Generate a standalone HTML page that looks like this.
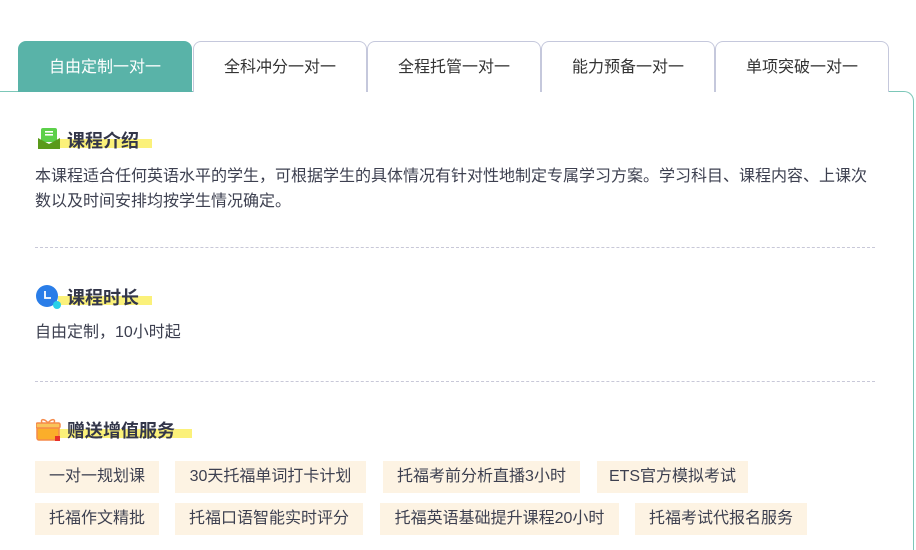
<!DOCTYPE html>
<html><head><meta charset="utf-8"><style>
*{margin:0;padding:0;box-sizing:border-box}
html,body{width:916px;height:550px;overflow:hidden}
body{background:#fff;font-family:"Liberation Sans","Noto Sans CJK SC",sans-serif;color:#3a3d4a;position:relative}
.tab{position:absolute;top:41px;height:51px;width:174px;border:1px solid #c5c8dc;border-bottom:none;border-radius:8px 8px 0 0;background:#fff;text-align:center;line-height:52px;font-size:16px;color:#333}
.tab.on{background:#59b3a8;border-color:#59b3a8;color:#fff}
.panel{position:absolute;left:-2px;top:91px;width:916px;height:459px;border:1px solid #7cc7b8;border-bottom:none;border-radius:0 10px 0 0}
.h{position:absolute;left:67px;font-size:18px;font-weight:bold;color:#33364a}
.hl{position:absolute;height:9px;background:#fbf17a}
.p{position:absolute;left:35px;font-size:16px;line-height:25px;color:#3d4050;width:840px}
.dash{position:absolute;left:35px;width:840px;border-top:1px dashed #c8c8d8}
.tag{position:absolute;height:32px;background:#fdf3e3;font-size:16px;line-height:32px;text-align:center;color:#3d4050}
</style></head><body>
<div class="panel"></div>
<div class="tab on" style="left:18px">自由定制一对一</div>
<div class="tab" style="left:193px">全科冲分一对一</div>
<div class="tab" style="left:367px">全程托管一对一</div>
<div class="tab" style="left:541px">能力预备一对一</div>
<div class="tab" style="left:715px">单项突破一对一</div>

<div class="hl" style="left:58px;top:139px;width:94px"></div>
<svg style="position:absolute;left:38px;top:128px" width="22" height="22"><rect x="3" y="0" width="16" height="14" rx="2" fill="#5cd04a"/><rect x="7" y="3" width="8" height="1.6" fill="#fff"/><rect x="7" y="6" width="8" height="1.6" fill="#fff"/><path d="M0 10 L11 16 L22 10 V21 H0Z" fill="#5a9a1a"/></svg>
<div class="h" style="top:127px">课程介绍</div>
<div class="p" style="top:164px">本课程适合任何英语水平的学生，可根据学生的具体情况有针对性地制定专属学习方案。学习科目、课程内容、上课次数以及时间安排均按学生情况确定。</div>
<div class="dash" style="top:247px"></div>

<div class="hl" style="left:58px;top:296px;width:94px"></div>
<svg style="position:absolute;left:36px;top:285px" width="26" height="26"><circle cx="11" cy="11" r="11" fill="#2a7de8"/><path d="M9 6 V13 H15" stroke="#fff" stroke-width="1.8" fill="none"/><circle cx="21" cy="20" r="4" fill="#2ad0e8"/></svg>
<div class="h" style="top:284px">课程时长</div>
<div class="p" style="top:320px">自由定制，10小时起</div>
<div class="dash" style="top:381px"></div>

<div class="hl" style="left:58px;top:429px;width:134px"></div>
<svg style="position:absolute;left:36px;top:418px" width="26" height="24"><rect x="1" y="8" width="22" height="14" rx="2" fill="#fbae2a" stroke="#f58a4a" stroke-width="1.5"/><rect x="0" y="5" width="24" height="5" rx="1.5" fill="#f9c45a" stroke="#f58a4a" stroke-width="1.5"/><path d="M12 5 C8 0 4 1 6 5 M12 5 C16 0 20 1 18 5" stroke="#f58a4a" stroke-width="1.5" fill="none"/><rect x="19" y="18" width="5" height="5" fill="#e8302a"/></svg>
<div class="h" style="top:417px">赠送增值服务</div>

<div class="tag" style="left:35px;top:461px;width:124px">一对一规划课</div>
<div class="tag" style="left:175px;top:461px;width:191px">30天托福单词打卡计划</div>
<div class="tag" style="left:383px;top:461px;width:197px">托福考前分析直播3小时</div>
<div class="tag" style="left:597px;top:461px;width:151px">ETS官方模拟考试</div>
<div class="tag" style="left:35px;top:503px;width:124px">托福作文精批</div>
<div class="tag" style="left:175px;top:503px;width:188px">托福口语智能实时评分</div>
<div class="tag" style="left:380px;top:503px;width:239px">托福英语基础提升课程20小时</div>
<div class="tag" style="left:635px;top:503px;width:172px">托福考试代报名服务</div>
</body></html>
